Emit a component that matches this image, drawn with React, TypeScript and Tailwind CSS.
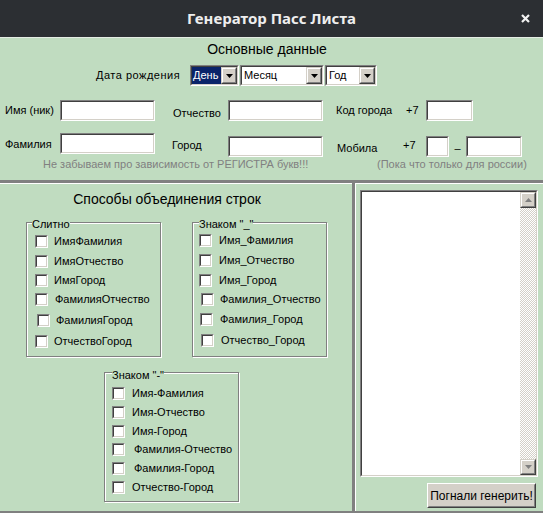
import type { ReactNode } from "react";

type Row = { t: string; mt: string; bx: string; gap: string };

const slitno: Row[] = [
  { t: "ИмяФамилия", mt: "mt-[12px]", bx: "ml-[8px]", gap: "ml-[6px]" },
  { t: "ИмяОтчество", mt: "mt-[7px]", bx: "ml-[8px]", gap: "ml-[6px]" },
  { t: "ИмяГород", mt: "mt-[6px]", bx: "ml-[8px]", gap: "ml-[6px]" },
  { t: "ФамилияОтчество", mt: "mt-[6px]", bx: "ml-[8px]", gap: "ml-[7px]" },
  { t: "ФамилияГород", mt: "mt-[8px]", bx: "ml-[10px]", gap: "ml-[6px]" },
  { t: "ОтчествоГород", mt: "mt-[8px]", bx: "ml-[8px]", gap: "ml-[6px]" },
];

const underscore: Row[] = [
  { t: "Имя_Фамилия", mt: "mt-[11px]", bx: "ml-[6px]", gap: "ml-[7px]" },
  { t: "Имя_Отчество", mt: "mt-[7px]", bx: "ml-[6px]", gap: "ml-[7px]" },
  { t: "Имя_Город", mt: "mt-[7px]", bx: "ml-[6px]", gap: "ml-[7px]" },
  { t: "Фамилия_Отчество", mt: "mt-[6px]", bx: "ml-[8px]", gap: "ml-[6px]" },
  { t: "Фамилия_Город", mt: "mt-[7px]", bx: "ml-[7px]", gap: "ml-[7px]" },
  { t: "Отчество_Город", mt: "mt-[8px]", bx: "ml-[8px]", gap: "ml-[7px]" },
];

const dash: Row[] = [
  { t: "Имя-Фамилия", mt: "mt-[14px]", bx: "ml-[7px]", gap: "ml-[7px]" },
  { t: "Имя-Отчество", mt: "mt-[6px]", bx: "ml-[7px]", gap: "ml-[7px]" },
  { t: "Имя-Город", mt: "mt-[6px]", bx: "ml-[7px]", gap: "ml-[7px]" },
  { t: "Фамилия-Отчество", mt: "mt-[5px]", bx: "ml-[7px]", gap: "ml-[9px]" },
  { t: "Фамилия-Город", mt: "mt-[6px]", bx: "ml-[7px]", gap: "ml-[9px]" },
  { t: "Отчество-Город", mt: "mt-[6px]", bx: "ml-[7px]", gap: "ml-[7px]" },
];

function Sunken({
  className = "",
  inner = "",
  children,
}: {
  className?: string;
  inner?: string;
  children?: ReactNode;
}) {
  return (
    <div
      className={
        "shrink-0 border border-t-[#808080] border-l-[#808080] border-r-white border-b-white " +
        className
      }
    >
      <div
        className={
          "h-full w-full border border-t-[#404040] border-l-[#404040] border-r-[#d4d0c8] border-b-[#d4d0c8] bg-white " +
          inner
        }
      >
        {children}
      </div>
    </div>
  );
}

function Raised({ className = "", children }: { className?: string; children?: ReactNode }) {
  return (
    <div
      className={
        "shrink-0 border border-t-[#d4d0c8] border-l-[#d4d0c8] border-r-[#404040] border-b-[#404040] bg-[#d4d0c8] " +
        className
      }
    >
      <div className="flex h-full w-full items-center justify-center border border-t-white border-l-white border-r-[#808080] border-b-[#808080]">
        {children}
      </div>
    </div>
  );
}

function Arrow({ up = false, color = "#000" }: { up?: boolean; color?: string }) {
  return (
    <svg width="7" height="4" viewBox="0 0 7 4">
      <path d={up ? "M0 4h7L3.5 0z" : "M0 0h7L3.5 4z"} fill={color} />
    </svg>
  );
}

function Select({
  className,
  text,
  selected = false,
}: {
  className: string;
  text: string;
  selected?: boolean;
}) {
  return (
    <Sunken className={"h-[21px] " + className} inner="flex">
      <div
        className={
          selected
            ? "flex flex-1 items-center bg-[#0a246a] pl-[1px] text-[11px] text-white"
            : "flex flex-1 items-center pl-[2px] text-[11px]"
        }
      >
        {text}
      </div>
      <Raised className="h-full w-[16px]">
        <Arrow />
      </Raised>
    </Sunken>
  );
}

function Check() {
  return (
    <div className="h-[13px] w-[13px] shrink-0 border border-t-[#808080] border-l-[#808080] border-r-white border-b-white">
      <div className="h-full w-full border border-t-[#404040] border-l-[#404040] border-r-[#d4d0c8] border-b-[#d4d0c8] bg-white" />
    </div>
  );
}

function Group({
  title,
  rows,
  className,
  legend,
}: {
  title: string;
  rows: Row[];
  className: string;
  legend: string;
}) {
  return (
    <div
      className={
        "relative shrink-0 border border-[#808080] shadow-[1px_1px_0_#ffffff,inset_1px_1px_0_#ffffff] " +
        className
      }
    >
      <span className={"absolute bg-[#c0dcc0] text-[11px] leading-[13px] " + legend}>{title}</span>
      <div className="flex flex-col overflow-hidden pr-[3px]">
        {rows.map((r) => (
          <div key={r.t} className={"flex h-[13px] items-center " + r.mt}>
            <div className={r.bx}>
              <Check />
            </div>
            <span className={"whitespace-nowrap text-[11px] leading-[13px] " + r.gap}>{r.t}</span>
          </div>
        ))}
      </div>
    </div>
  );
}

export default function App() {
  return (
    <div className="flex h-[513px] w-[543px] flex-col overflow-hidden bg-[#c0dcc0] font-['Liberation_Sans',Arial,sans-serif] text-black">
      {/* title bar */}
      <div className="flex h-[37px] shrink-0 items-center bg-[#2c2f33]">
        <div className="w-[40px]" />
        <div className="flex-1 text-center font-['Noto_Sans',sans-serif] text-[15px] font-bold text-[#eeeeee]">
          Генератор Пасс Листа
        </div>
        <div className="flex w-[40px] justify-end pr-[13px]">
          <svg width="9" height="9" viewBox="0 0 9 9">
            <path d="M1 1l7 7M8 1L1 8" stroke="#f2f2f2" strokeWidth="2.2" />
          </svg>
        </div>
      </div>
      <div className="h-px shrink-0 bg-[#e4ece4]" />

      {/* основные данные */}
      <div className="flex h-[142px] shrink-0 flex-col">
        <div className="mt-[3px] flex h-[16px] items-center justify-center pr-[9px] text-[14px]">
          Основные данные
        </div>
        <div className="mt-[8px] flex h-[21px] items-center">
          <div className="w-[190px] shrink-0 pl-[96px] text-[11px] tracking-[0.5px]">Дата рождения</div>
          <Select className="w-[49px]" text="День" selected />
          <Select className="ml-[1px] w-[84px]" text="Месяц" />
          <Select className="ml-[1px] w-[52px]" text="Год" />
        </div>

        <div className="mt-[14px] flex h-[21px] items-start text-[11px]">
          <div className="flex h-[21px] w-[60px] shrink-0 items-center pl-[5px]">Имя (ник)</div>
          <Sunken className="h-[21px] w-[95px]" />
          <div className="mt-[3px] flex h-[21px] w-[73px] shrink-0 items-center pl-[18px]">Отчество</div>
          <Sunken className="h-[21px] w-[95px]" />
          <div className="flex h-[21px] w-[77px] shrink-0 items-center pl-[13px]">Код города</div>
          <div className="flex h-[21px] w-[26px] shrink-0 items-center pl-[6px]">+7</div>
          <Sunken className="h-[21px] w-[47px]" />
        </div>

        <div className="mt-[12px] flex h-[24px] items-start text-[11px]">
          <div className="mt-[1px] flex h-[21px] w-[60px] shrink-0 items-center pl-[5px]">Фамилия</div>
          <Sunken className="h-[21px] w-[95px]" />
          <div className="mt-[2px] flex h-[21px] w-[73px] shrink-0 items-center pl-[17px]">Город</div>
          <Sunken className="mt-[3px] h-[21px] w-[95px]" />
          <div className="mt-[5px] flex h-[21px] w-[77px] shrink-0 items-center pl-[14px]">Мобила</div>
          <div className="mt-[2px] flex h-[21px] w-[26px] shrink-0 items-center pl-[3px]">+7</div>
          <Sunken className="mt-[3px] h-[21px] w-[23px]" />
          <div className="mt-[5px] flex h-[21px] w-[17px] shrink-0 items-center justify-center">–</div>
          <Sunken className="mt-[3px] h-[21px] w-[56px]" />
        </div>

        <div className="mt-[1px] flex h-[13px] items-center text-[11px] text-[#808080]">
          <div className="w-[377px] shrink-0 pl-[43px]">Не забываем про зависимость от РЕГИСТРА букв!!!</div>
          <div>(Пока что только для россии)</div>
        </div>
      </div>

      <div className="h-[3px] shrink-0 bg-[#808080]" />

      <div className="flex min-h-0 flex-1">
        {/* способы объединения */}
        <div className="flex w-[352px] shrink-0 flex-col border-t border-white">
          <div className="mt-[7px] flex h-[16px] items-center justify-center pr-[18px] text-[14px]">
            Способы объединения строк
          </div>
          <div className="mt-[15px] flex">
            <Group
              title="Слитно"
              rows={slitno}
              className="ml-[26px] h-[135px] w-[135px]"
              legend="-top-[5px] left-[5px]"
            />
            <Group
              title={'Знаком "_"'}
              rows={underscore}
              className="ml-[31px] h-[135px] w-[135px]"
              legend="-top-[5px] left-[6px]"
            />
          </div>
          <Group
            title={'Знаком "-"'}
            rows={dash}
            className="ml-[104px] mt-[15px] h-[130px] w-[135px]"
            legend="-top-[4px] left-[7px]"
          />
        </div>

        <div className="w-[3px] shrink-0 bg-[#808080]" />

        {/* результат */}
        <div className="flex min-w-0 flex-1 flex-col border-l border-t border-white">
          <Sunken className="ml-[4px] mt-[6px] h-[287px] w-[178px]" inner="flex justify-end">
            <div className="flex w-[16px] flex-col">
              <Raised className="h-[16px] w-[16px]">
                <Arrow up color="#808080" />
              </Raised>
              <div className="flex-1 bg-[image:repeating-conic-gradient(#d4d0c8_0_25%,#ffffff_0_50%)] bg-[length:2px_2px]" />
              <Raised className="h-[16px] w-[16px]">
                <Arrow color="#808080" />
              </Raised>
            </div>
          </Sunken>
          <button
            type="button"
            className="ml-[71px] mt-[6px] h-[25px] w-[109px] border border-t-white border-l-white border-r-[#404040] border-b-[#404040] bg-[#d4d0c8] p-0"
          >
            <div className="flex h-full w-full items-center justify-center border border-t-[#d4d0c8] border-l-[#d4d0c8] border-r-[#808080] border-b-[#808080] text-[12px]">
              Погнали генерить!
            </div>
          </button>
        </div>
      </div>

      <div className="h-[2px] shrink-0 bg-[#808080]" />
    </div>
  );
}
